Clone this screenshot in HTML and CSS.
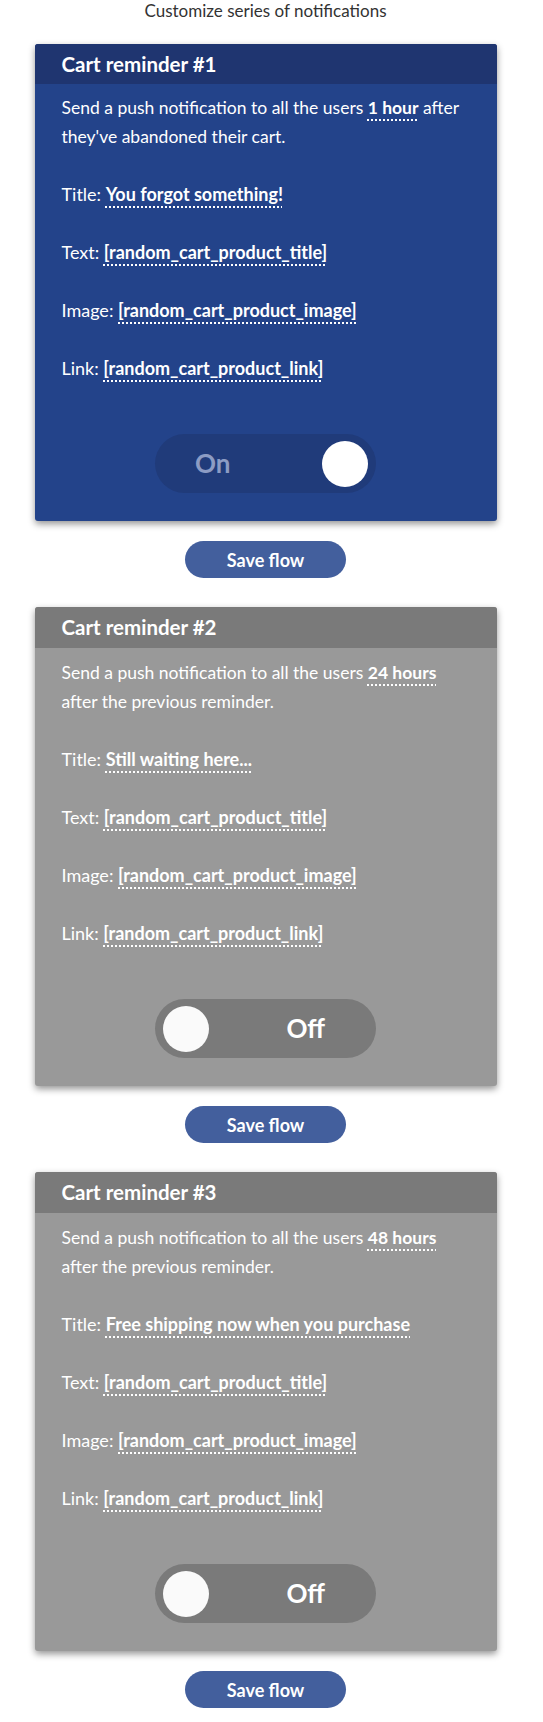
FILE: index.html
```html
<!DOCTYPE html>
<html>
<head>
<meta charset="utf-8">
<link rel="stylesheet" href="styles.css">
</head>
<body>
<div class="page">
  <h1 class="heading">Customize series of notifications</h1>

  <section class="flow">
    <div class="card card-on">
      <div class="card-head">Cart reminder #1</div>
      <div class="card-body">
        <p class="intro">Send a push notification to all the users <b class="val">1 hour</b> after they've abandoned their cart.</p>
        <p>Title: <b class="val">You forgot something!</b></p>
        <p>Text: <b class="val">[random_cart_product_title]</b></p>
        <p>Image: <b class="val">[random_cart_product_image]</b></p>
        <p>Link: <b class="val">[random_cart_product_link]</b></p>
        <div class="toggle toggle-on"><span class="toggle-label">On</span><span class="knob"></span></div>
      </div>
    </div>
    <button class="save">Save flow</button>
  </section>

  <section class="flow">
    <div class="card card-off">
      <div class="card-head">Cart reminder #2</div>
      <div class="card-body">
        <p class="intro">Send a push notification to all the users <b class="val">24 hours</b> after the previous reminder.</p>
        <p>Title: <b class="val">Still waiting here...</b></p>
        <p>Text: <b class="val">[random_cart_product_title]</b></p>
        <p>Image: <b class="val">[random_cart_product_image]</b></p>
        <p>Link: <b class="val">[random_cart_product_link]</b></p>
        <div class="toggle toggle-off"><span class="knob"></span><span class="toggle-label">Off</span></div>
      </div>
    </div>
    <button class="save">Save flow</button>
  </section>

  <section class="flow">
    <div class="card card-off">
      <div class="card-head">Cart reminder #3</div>
      <div class="card-body">
        <p class="intro">Send a push notification to all the users <b class="val">48 hours</b> after the previous reminder.</p>
        <p>Title: <b class="val">Free shipping now when you purchase</b></p>
        <p>Text: <b class="val">[random_cart_product_title]</b></p>
        <p>Image: <b class="val">[random_cart_product_image]</b></p>
        <p>Link: <b class="val">[random_cart_product_link]</b></p>
        <div class="toggle toggle-off"><span class="knob"></span><span class="toggle-label">Off</span></div>
      </div>
    </div>
    <button class="save">Save flow</button>
  </section>
</div>
</body>
</html>
```

FILE: styles.css
```css
html, body {
  margin: 0;
  padding: 0;
  background: #ffffff;
}

body {
  font-family: Lato, "Open Sans", "Liberation Sans", sans-serif;
  color: #333333;
}

.page {
  width: 531px;
  padding-top: 1px;
  display: flex;
  flex-direction: column;
  align-items: center;
}

.heading {
  margin: 0 0 23px;
  font-size: 17px;
  font-weight: 400;
  line-height: 20px;
  color: #333333;
  text-align: center;
}

.flow {
  display: flex;
  flex-direction: column;
  align-items: center;
  margin-bottom: 29px;
}

.card {
  width: 462px;
  border-radius: 3px;
  overflow: hidden;
  box-shadow: 0 3px 7px rgba(0, 0, 0, 0.42);
  color: #ffffff;
}

.card-on { background: #23438a; }
.card-on .card-head { background: #1f3570; }

.card-off { background: #999999; }
.card-off .card-head {
  background: #7a7a7a;
  height: 41px;
  line-height: 41px;
}

.card-head {
  height: 40px;
  padding: 0 27px;
  font-size: 20.5px;
  font-weight: 700;
  line-height: 40px;
}

.card-body {
  padding: 9px 27px 28px;
  font-size: 18px;
  line-height: 29px;
}

.card-off .card-body {
  padding-top: 10px;
}

.card-body p {
  margin: 0 0 29px;
}

.card-body .intro {
  font-size: 17.5px;
}

.val {
  font-weight: 700;
  text-decoration-line: underline;
  text-decoration-style: dotted;
  text-decoration-thickness: 2px;
  text-underline-offset: 5px;
  text-decoration-color: #ffffff;
}

.toggle {
  width: 221px;
  height: 59px;
  margin: 51px auto 0;
  border-radius: 30px;
  display: flex;
  align-items: center;
  box-sizing: border-box;
  font-size: 26px;
  font-weight: 700;
}

.toggle-on {
  background: #203b7a;
  padding: 0 8px 0 40px;
  justify-content: space-between;
}

.toggle-on .toggle-label { color: #8c9cc4; }

.toggle-off {
  background: #7a7a7a;
  padding: 0 51px 0 8px;
  justify-content: space-between;
}

.toggle-off .toggle-label { color: #ffffff; }

.knob {
  width: 46px;
  height: 46px;
  border-radius: 50%;
  background: #fafafa;
}

.toggle-on .knob { background: #ffffff; }

.save {
  margin-top: 20px;
  width: 161px;
  height: 37px;
  border: none;
  border-radius: 19px;
  background: #435f9d;
  color: #ffffff;
  font-family: Lato, "Open Sans", "Liberation Sans", sans-serif;
  font-size: 18px;
  font-weight: 700;
  padding: 0;
}
```
